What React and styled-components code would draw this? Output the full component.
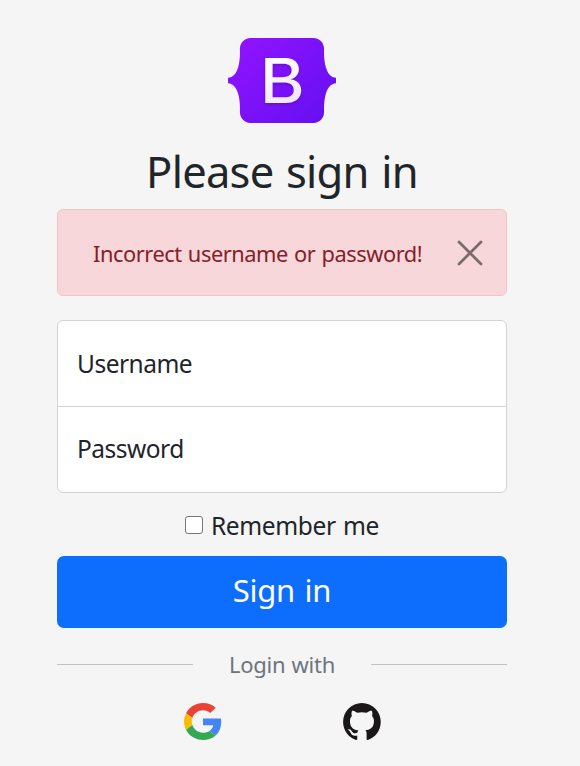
import React from "react";
import styled, { createGlobalStyle } from "styled-components";

const GlobalStyle = createGlobalStyle`
  *, *::before, *::after { box-sizing: border-box; }
  body {
    margin: 0;
    background: #f5f5f5;
    color: #212529;
    font-family: "Noto Sans", "Open Sans", sans-serif;
  }
`;

const Page = styled.main`
  width: 580px;
  height: 766px;
  padding: 38px 73px 0 57px;
  background: #f5f5f5;
  overflow: hidden;
`;

const Form = styled.form`
  display: flex;
  flex-direction: column;
  width: 450px;
`;

const Brand = styled.svg`
  display: block;
  align-self: center;
  width: 108px;
  height: 85px;
`;

const Title = styled.h1`
  margin: 22px 0 11px;
  height: 53px;
  line-height: 53px;
  font-size: 43.5px;
  font-weight: 400;
  text-align: center;
  white-space: nowrap;
`;

const Label = styled.span`
  flex: none;
  display: block;
  white-space: nowrap;
  font-size: ${(p) => p.$size}px;
  letter-spacing: ${(p) => p.$spacing || 0}px;
  word-spacing: ${(p) => p.$word || 0}px;
`;

const Alert = styled.div`
  display: flex;
  align-items: center;
  justify-content: space-between;
  height: 87px;
  padding: 1px 23px 0 35px;
  border: 1px solid #f5c2c7;
  border-radius: 6px;
  background: #f8d7da;
  color: #842029;
`;

const CloseButton = styled.button`
  width: 26px;
  height: 26px;
  margin-top: -1px;
  padding: 0;
  border: 0;
  background: none;
  opacity: 0.5;

  svg { display: block; }
`;

const Fields = styled.div`
  margin-top: 24px;
  height: 173px;
  border: 1px solid #ced4da;
  border-radius: 6px;
  background: #fff;
`;

const Field = styled.label`
  display: flex;
  align-items: center;
  height: ${(p) => (p.$divided ? 86 : 85)}px;
  padding: 0 19px ${(p) => (p.$divided ? 1 : 3)}px;
  border-bottom: ${(p) => (p.$divided ? "1px solid #ced4da" : "0")};
`;

const Remember = styled.label`
  display: flex;
  align-items: center;
  justify-content: center;
  gap: 8px;
  height: 63px;
  padding-top: 1px;
`;

const Checkbox = styled.input`
  appearance: none;
  width: 18px;
  height: 18px;
  margin: 0;
  border: 1px solid #767676;
  border-radius: 3px;
  background: #fff;
`;

const Submit = styled.button`
  display: flex;
  align-items: center;
  justify-content: center;
  height: 72px;
  padding: 0 0 4px;
  border: 0;
  border-radius: 7px;
  background: #0d6efd;
  color: #fff;
  font-family: inherit;
`;

const Divider = styled.div`
  display: flex;
  align-items: center;
  justify-content: space-between;
  height: 30px;
  margin-top: 21px;
  color: #6c757d;
`;

const Rule = styled.span`
  width: 136px;
  height: 1px;
  background: #c1c2c3;
`;

const Providers = styled.div`
  display: flex;
  gap: 121px;
  margin: 24px 0 0 127px;
`;

const ProviderIcon = styled.svg`
  display: block;
  width: 38px;
  height: 37px;
`;

function BootstrapLogo() {
  return (
    <Brand viewBox="0 0 118 94" preserveAspectRatio="none" aria-label="Bootstrap">
      <defs>
        <linearGradient id="body" x1="13" y1="2" x2="105" y2="92" gradientUnits="userSpaceOnUse">
          <stop stopColor="#9013fe" />
          <stop offset="1" stopColor="#6610f2" />
        </linearGradient>
        <linearGradient id="letter" x1="48" y1="22" x2="68" y2="72" gradientUnits="userSpaceOnUse">
          <stop stopColor="#fff" />
          <stop offset="1" stopColor="#f1e5fc" />
        </linearGradient>
        <filter id="shadow" x="-20%" y="-20%" width="140%" height="150%">
          <feDropShadow dx="0" dy="1.5" stdDeviation="1.5" floodColor="#000" floodOpacity="0.2" />
        </filter>
      </defs>
      <path
        fill="url(#body)"
        d="M24.509 0c-6.733 0-11.715 5.893-11.492 12.284.214 6.14-.064 14.092-2.066 20.577C8.943 39.365 5.547 43.485 0 44.014v5.972c5.547.529 8.943 4.649 10.951 11.153 2.002 6.485 2.28 14.437 2.066 20.577C12.794 88.106 17.776 94 24.51 94H93.5c6.733 0 11.714-5.893 11.491-12.284-.214-6.14.064-14.092 2.066-20.577 2.009-6.504 5.396-10.624 10.943-11.153v-5.972c-5.547-.529-8.934-4.649-10.943-11.153-2.002-6.484-2.28-14.437-2.066-20.577C105.214 5.894 100.233 0 93.5 0z"
      />
      <path
        fill="url(#letter)"
        filter="url(#shadow)"
        fillRule="evenodd"
        d="M80 57.863C80 66.663 73.436 72 62.543 72H40.7V22h21.737c9.083 0 15.044 4.92 15.044 12.474 0 5.302-4.01 10.049-9.119 10.88v.277C75.317 46.394 80 51.21 80 57.863zM60.521 28.34H48.7v14.934h10.153c6.884 0 10.68-2.772 10.68-7.727 0-4.643-3.264-7.207-9.012-7.207zM48.7 49.2v16.458h12.21c7.167 0 10.964-2.876 10.964-8.281 0-5.406-3.903-8.178-11.425-8.178z"
      />
    </Brand>
  );
}

function GoogleIcon() {
  return (
    <ProviderIcon viewBox="0 0 48 48" preserveAspectRatio="none" aria-label="Google">
      <path fill="#EA4335" d="M24 9.5c3.54 0 6.71 1.22 9.21 3.6l6.85-6.85C35.9 2.38 30.47 0 24 0 14.62 0 6.51 5.38 2.56 13.22l7.98 6.19C12.43 13.72 17.74 9.5 24 9.5z" />
      <path fill="#4285F4" d="M46.98 24.55c0-1.57-.15-3.09-.38-4.55H24v9.02h12.94c-.58 2.96-2.26 5.48-4.78 7.18l7.73 6c4.51-4.18 7.09-10.36 7.09-17.65z" />
      <path fill="#FBBC05" d="M10.53 28.59c-.48-1.45-.76-2.99-.76-4.59s.27-3.14.76-4.59l-7.98-6.19C.92 16.46 0 20.12 0 24c0 3.88.92 7.54 2.56 10.78l7.97-6.19z" />
      <path fill="#34A853" d="M24 48c6.48 0 11.93-2.13 15.89-5.81l-7.73-6c-2.15 1.45-4.92 2.3-8.16 2.3-6.26 0-11.57-4.22-13.47-9.91l-7.98 6.19C6.51 42.62 14.62 48 24 48z" />
    </ProviderIcon>
  );
}

function GitHubIcon() {
  return (
    <ProviderIcon viewBox="0 0 98 96" aria-label="GitHub">
      <path fill="#191717" fillRule="evenodd" d="M48.854 0C21.839 0 0 22 0 49.217c0 21.756 13.993 40.172 33.405 46.69 2.427.49 3.316-1.059 3.316-2.362 0-1.141-.08-5.052-.08-9.127-13.59 2.934-16.42-5.867-16.42-5.867-2.184-5.704-5.42-7.17-5.42-7.17-4.448-3.015.324-3.015.324-3.015 4.934.326 7.523 5.052 7.523 5.052 4.367 7.496 11.404 5.378 14.235 4.074.404-3.178 1.699-5.378 3.074-6.6-10.839-1.141-22.243-5.378-22.243-24.283 0-5.378 1.94-9.778 5.014-13.2-.485-1.222-2.184-6.275.486-13.038 0 0 4.125-1.304 13.426 5.052a46.97 46.97 0 0 1 12.214-1.63c4.125 0 8.33.571 12.213 1.63 9.302-6.356 13.427-5.052 13.427-5.052 2.67 6.763.97 11.816.485 13.038 3.155 3.422 5.015 7.822 5.015 13.2 0 18.905-11.404 23.06-22.324 24.283 1.78 1.548 3.316 4.481 3.316 9.126 0 6.6-.08 11.897-.08 13.526 0 1.304.89 2.853 3.316 2.364 19.412-6.52 33.405-24.935 33.405-46.691C97.707 22 75.788 0 48.854 0z" />
    </ProviderIcon>
  );
}

export default function App() {
  return (
    <Page>
      <GlobalStyle />
      <Form onSubmit={(e) => e.preventDefault()}>
        <BootstrapLogo />
        <Title><Label $size={43.5} $spacing={-0.75} $word={2}>Please sign in</Label></Title>
        <Alert role="alert">
          <Label $size={21.8} $spacing={-0.45} $word={1}>Incorrect username or password!</Label>
          <CloseButton type="button" aria-label="Close">
            <svg width="26" height="26" viewBox="0 0 26 26" stroke="#000" strokeWidth="2.8" strokeLinecap="round">
              <path d="M2 2 24 24M24 2 2 24" />
            </svg>
          </CloseButton>
        </Alert>
        <Fields>
          <Field $divided><Label $size={24.5} $spacing={-0.5}>Username</Label></Field>
          <Field><Label $size={24.5} $spacing={-0.5}>Password</Label></Field>
        </Fields>
        <Remember>
          <Checkbox type="checkbox" />
          <Label $size={24.5} $spacing={-0.35} $word={1.2}>Remember me</Label>
        </Remember>
        <Submit type="submit"><Label $size={31} $spacing={-0.3} $word={2}>Sign in</Label></Submit>
        <Divider>
          <Rule />
          <Label $size={22} $spacing={-0.3} $word={1}>Login with</Label>
          <Rule />
        </Divider>
        <Providers>
          <GoogleIcon />
          <GitHubIcon />
        </Providers>
      </Form>
    </Page>
  );
}
